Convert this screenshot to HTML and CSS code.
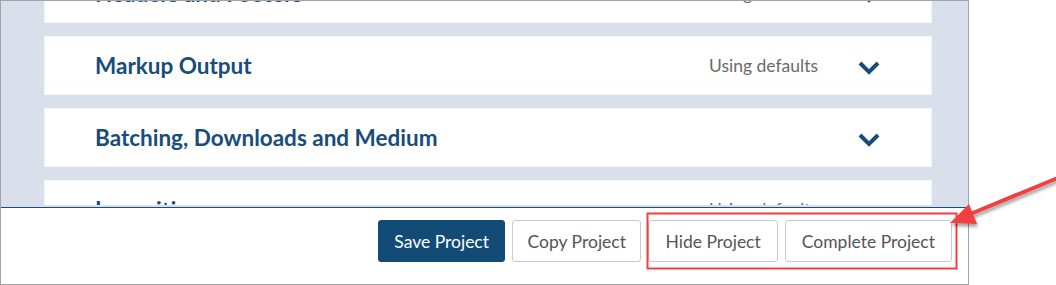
FILE: index.html
```html
<!DOCTYPE html>
<html lang="en">
<head>
<meta charset="utf-8">
<title>Project settings</title>
<link rel="stylesheet" href="styles.css">
</head>
<body>
<div class="window">
  <div class="scroller">
    <div class="sections">
      <div class="section">
        <h2 class="title">Headers and Footers</h2>
        <span class="status">Using defaults</span>
        <svg class="chevron" viewBox="0 0 22 14"><path d="M2 2 L11 11 L20 2"/></svg>
      </div>
      <div class="section">
        <h2 class="title">Markup Output</h2>
        <span class="status">Using defaults</span>
        <svg class="chevron" viewBox="0 0 22 14"><path d="M2 2 L11 11 L20 2"/></svg>
      </div>
      <div class="section">
        <h2 class="title">Batching, Downloads and Medium</h2>
        <svg class="chevron" viewBox="0 0 22 14"><path d="M2 2 L11 11 L20 2"/></svg>
      </div>
      <div class="section">
        <h2 class="title">Imposition</h2>
        <span class="status">Using defaults</span>
        <svg class="chevron" viewBox="0 0 22 14"><path d="M2 2 L11 11 L20 2"/></svg>
      </div>
    </div>
  </div>
  <div class="footer">
    <button class="btn btn-primary">Save Project</button>
    <button class="btn btn-copy">Copy Project</button>
    <button class="btn">Hide Project</button>
    <button class="btn">Complete Project</button>
  </div>
</div>
<svg class="annotation" width="1056" height="285" viewBox="0 0 1056 285">
  <defs>
    <filter id="sh" x="-20%" y="-20%" width="140%" height="160%">
      <feDropShadow dx="1" dy="3" stdDeviation="1.5" flood-color="#000" flood-opacity="0.35"/>
    </filter>
  </defs>
  <rect x="647.5" y="213.5" width="309" height="55" fill="none" stroke="#ef4043" stroke-width="2"/>
  <g filter="url(#sh)">
    <line x1="1060" y1="177" x2="968" y2="215" stroke="#ef4043" stroke-width="4"/>
    <polygon points="950,223 969,204 977,224" fill="#ef4043"/>
  </g>
</svg>
</body>
</html>
```

FILE: styles.css
```css
* { box-sizing: border-box; }
html, body { margin: 0; padding: 0; background: #fff; }
body {
  position: relative;
  width: 1056px;
  height: 285px;
  overflow: hidden;
  font-family: Lato, "Open Sans", sans-serif;
}
.window {
  width: 969px;
  height: 285px;
  border: 1px solid #a3a3a3;
  display: flex;
  flex-direction: column;
  background: #fff;
}
.scroller {
  height: 206px;
  flex: none;
  overflow: hidden;
  background: #dae0eb;
  border-bottom: 2px solid #dae0eb;
  padding: 0 36px 0 43px;
}
.sections {
  margin-top: -37px;
  display: flex;
  flex-direction: column;
  gap: 13px;
}
.section {
  height: 59px;
  flex: none;
  background: #fff;
  border: 1px solid #f3f4f7;
  display: flex;
  align-items: center;
  padding: 0 51px 0 50px;
}
.title {
  flex: 1;
  margin: 0 0 1px;
  font-size: 22.5px;
  font-weight: 700;
  color: #174c7b;
}
.status {
  font-size: 17.5px;
  color: #6a6a6a;
  margin-right: 40px;
}
.chevron {
  width: 22px;
  height: 14px;
  margin-top: 4px;
}
.chevron path {
  fill: none;
  stroke: #174c7b;
  stroke-width: 4;
}
.footer {
  flex: 1;
  border-top: 1px solid #1b4d7a;
  display: flex;
  justify-content: flex-end;
  align-items: flex-start;
  gap: 7px;
  padding: 12px 16px 0 0;
}
.btn {
  height: 42px;
  padding: 0 16px;
  border: 1px solid #cacaca;
  border-radius: 3px;
  background: #fff;
  color: #555;
  font-family: Lato, "Open Sans", sans-serif;
  font-size: 17.5px;
}
.btn-primary {
  padding: 0 15px;
  background: #134b77;
  border-color: #134b77;
  color: #fff;
}
.btn-copy {
  padding: 0 14.5px;
}
.annotation {
  position: absolute;
  left: 0;
  top: 0;
  pointer-events: none;
}
```
